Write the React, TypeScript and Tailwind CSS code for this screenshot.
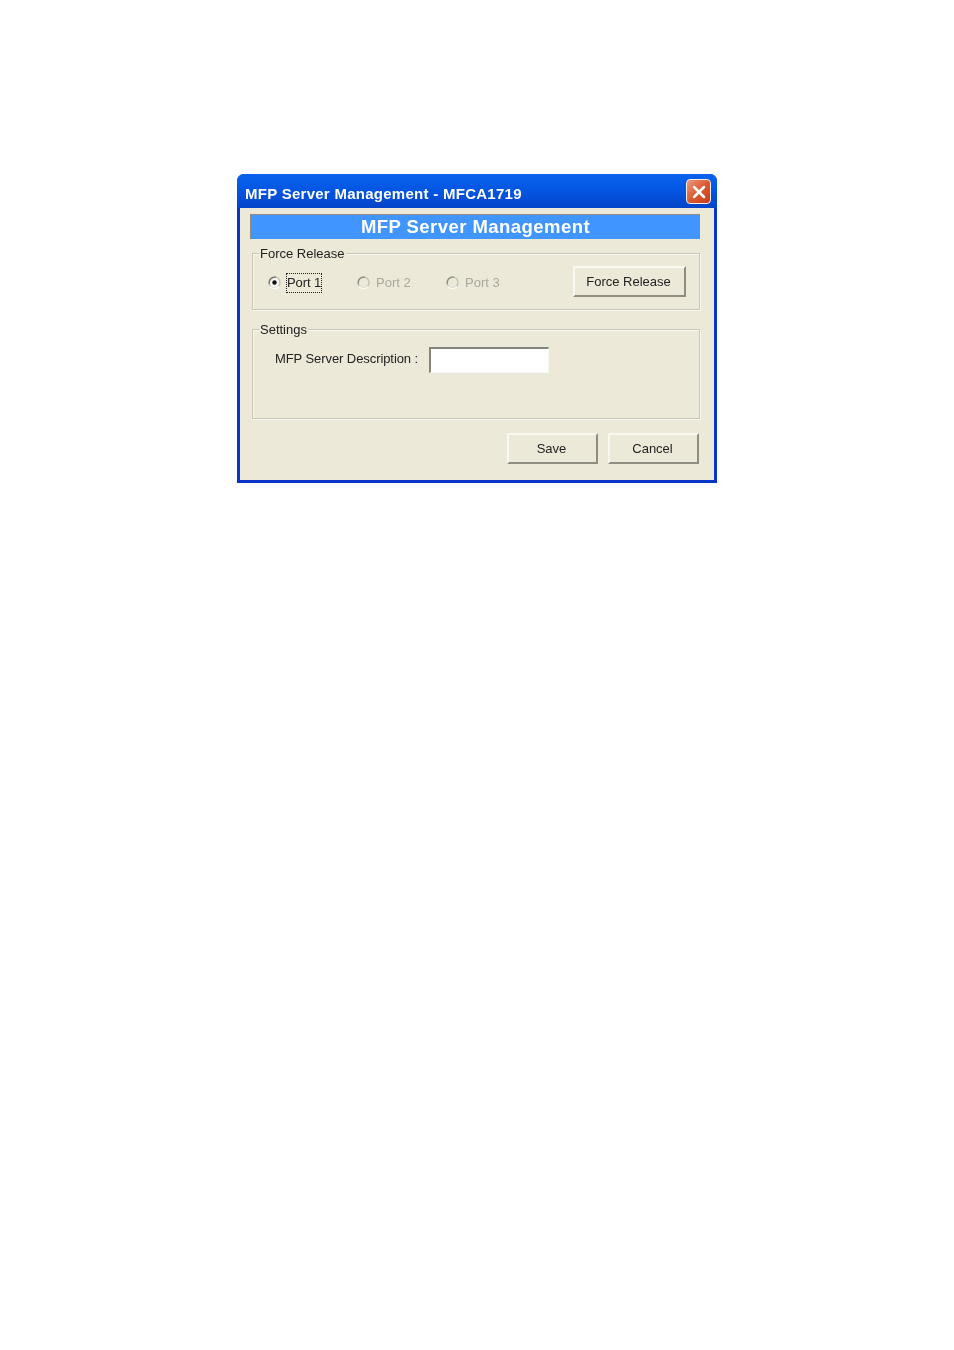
import { X } from "lucide-react";

const body = "font-['Liberation_Sans',Arial,sans-serif] text-[13px] leading-[16px]";

// XP raised push button: white top/left, dark bottom/right
function PushButton({ label, className }: { label: string; className: string }) {
  return (
    <button
      className={`h-[31px] border-t-2 border-l-2 border-t-[#f8f7f0] border-l-[#f8f7f0] border-b-2 border-r-2 border-b-[#8f8d81] border-r-[#8f8d81] bg-[#ece9d9] pr-[2px] text-[#222] ${body} ${className}`}
    >
      {label}
    </button>
  );
}

function Radio({ label, checked, disabled }: { label: string; checked?: boolean; disabled?: boolean }) {
  return (
    <div className={`flex w-[89px] items-center gap-[5px] pt-[2px] ${body}`}>
      <svg width="13" height="13" viewBox="0 0 13 13" className="shrink-0">
        <circle cx="6.5" cy="6.5" r="5.5" fill={disabled ? "#ece9d9" : "#f7f6f0"} stroke="#c4c2b4" strokeWidth="1.4" />
        <path d="M2 10.5A6 6 0 0 0 11 10.5" stroke="#fbfaf5" strokeWidth="1.4" fill="none" />
        <path d="M1.5 8A5.5 5.5 0 0 1 8 1.2" stroke={disabled ? "#8f8d82" : "#77756b"} strokeWidth="1.3" fill="none" />
        {checked && <circle cx="6.5" cy="6.5" r="2.2" fill="#111" />}
      </svg>
      {checked ? (
        <span className="border border-dotted border-[#222] py-[1px] tracking-[-0.1px] text-[#222]">{label}</span>
      ) : (
        <span className="ml-px text-[#aaa89c]">{label}</span>
      )}
    </div>
  );
}

export default function App() {
  return (
    <div className="h-[1350px] w-[954px] bg-white pl-[237px] pt-[174px]">
      <div className="h-[309px] w-[480px] overflow-hidden rounded-t-[7px] bg-[#0a34c8] blur-[0.35px]">
        {/* title bar */}
        <div className="flex h-[34px] items-center justify-between bg-gradient-to-b from-[#0a62ec] via-[#0355e2] to-[#0444c8] pl-[8px] pr-[6px]">
          <span className="pt-[6px] font-['Liberation_Sans',Arial,sans-serif] text-[15px] font-bold tracking-[0.27px] text-white">
            MFP Server Management - MFCA1719
          </span>
          <div className="mt-px flex h-[25px] w-[25px] items-center justify-center rounded-[4px] border border-[#f4efe8] bg-gradient-to-br from-[#ea9a7c] via-[#dc5a30] to-[#c43c18]">
            <X size={20} strokeWidth={3} color="#fff" />
          </div>
        </div>

        {/* client area */}
        <div className="mx-[3px] flex h-[272px] flex-col bg-[#ece9d9] pl-[10px] pr-[14px] pt-[6px]">
          <div className="flex h-[25px] items-center justify-center border-t border-l border-t-[#8f8d82] border-l-[#8f8d82] bg-[#4095ff] font-['Liberation_Sans',Arial,sans-serif] text-[18.5px] font-bold tracking-[0.45px] text-white">
            MFP Server Management
          </div>

          <div className="relative ml-[2px] mt-[14px] flex h-[57px] items-start border border-[#c9c7b8] pl-[15px] pr-[13px] pt-[12px] shadow-[inset_1px_1px_0_#f8f7f0,1px_1px_0_#f8f7f0]">
            <span className={`absolute left-[6px] top-[-8px] bg-[#ece9d9] px-px text-[#222] ${body}`}>Force Release</span>
            <div className="flex h-[31px] flex-1 items-center">
              <Radio label="Port 1" checked />
              <Radio label="Port 2" disabled />
              <Radio label="Port 3" disabled />
            </div>
            <PushButton label="Force Release" className="w-[113px]" />
          </div>

          <div className="relative ml-[2px] mt-[19px] flex h-[90px] items-start border border-[#c9c7b8] pl-[22px] pt-[17px] shadow-[inset_1px_1px_0_#f8f7f0,1px_1px_0_#f8f7f0]">
            <span className={`absolute left-[6px] top-[-8px] bg-[#ece9d9] px-px text-[#222] ${body}`}>Settings</span>
            <span className={`mr-[11px] mt-[4px] w-[143px] whitespace-nowrap tracking-[-0.08px] text-[#222] ${body}`}>MFP Server Description :</span>
            <div className="h-[26px] w-[120px] border-t-2 border-l-2 border-t-[#85837a] border-l-[#85837a] border-b border-r border-b-[#f8f7f0] border-r-[#f8f7f0] bg-white" />
          </div>

          <div className="mt-[14px] flex justify-end gap-[10px] pr-[1px]">
            <PushButton label="Save" className="w-[91px]" />
            <PushButton label="Cancel" className="w-[91px]" />
          </div>
        </div>
      </div>
    </div>
  );
}
